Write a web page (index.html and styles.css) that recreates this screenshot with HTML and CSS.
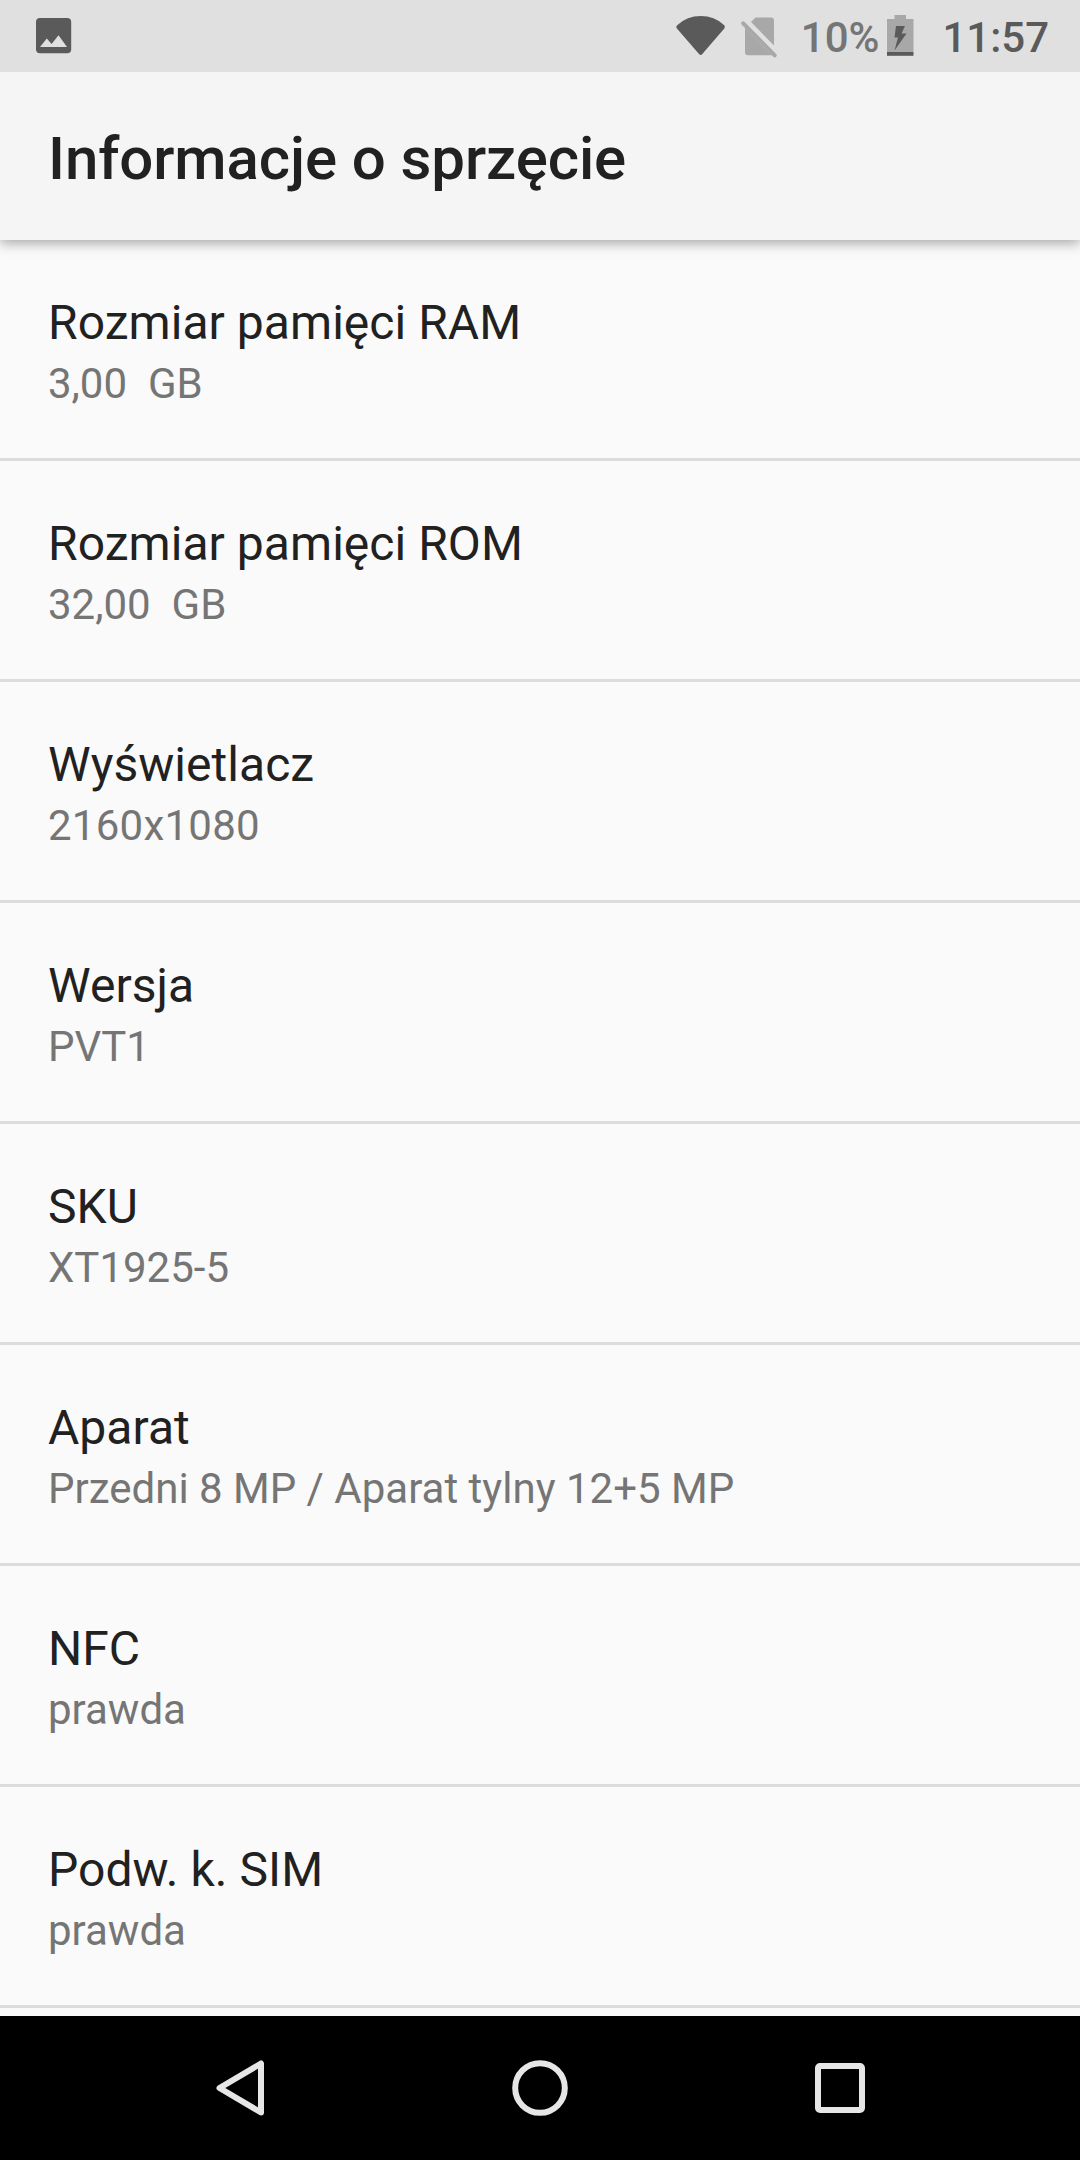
FILE: index.html
```html
<!DOCTYPE html>
<html lang="pl">
<head>
	<meta charset="UTF-8">
	<title>Informacje o sprzęcie</title>
	<link rel="stylesheet" href="styles.css">
</head>
<body>
	<div id="wrap-screen">
		<div class="status-bar">
			<svg class="icon-image" width="36" height="36" viewBox="0 0 36 36">
				<rect width="35.2" height="35.2" rx="4" fill="#5a5a5a"/>
				<path d="M4 29L10.8 20.5L15.6 26L22.5 17.3L31 29Z" fill="#e0e0e0"/>
			</svg>
			<div class="status-right">
				<svg class="icon-wifi" width="50" height="40" viewBox="0 0 50 40">
					<path d="M1.5 9Q11 0 24.7 0Q38.5 0 48 9Q49.5 10.500 48.300 12.500L26.300 38Q24.700 40 23 38L.9 12.500Q-.5 10.500 1.500 9Z" fill="#5a5a5a"/>
				</svg>
				<svg class="icon-sim" width="36" height="42" viewBox="0 0 36 42">
					<path d="M14.500 .5H30Q33 .5 33 3.500V28.500L10 5Z" fill="#a8a8a8"/>
					<path d="M4 10.500L30.800 38.300H7Q4 38.300 4 35.300Z" fill="#a8a8a8"/>
					<path d="M2.200 6.300L33.700 38.300" stroke="#a8a8a8" stroke-width="4" stroke-linecap="round"/>
				</svg>
				<span class="percent">10%</span>
				<svg class="icon-battery" width="27" height="41" viewBox="0 0 27 41">
					<path d="M7.500 0H19V4H26.500V37H0V4H7.500Z" fill="#a8a8a8"/>
					<path d="M9 11H18L14.500 18.500H19.500L7.500 35.500L11 22.500H7.500Z" fill="#5a5a5a"/>
					<rect y="37" width="26.500" height="3.800" fill="#5a5a5a"/>
				</svg>
				<span class="clock">11:57</span>
			</div>
		</div>
		<div class="toolbar">
			<h1>Informacje o sprzęcie</h1>
		</div>
		<ul class="info-list">
			<li>
				<h2>Rozmiar pamięci RAM</h2>
				<p>3,00&nbsp; GB</p>
			</li>
			<li>
				<h2>Rozmiar pamięci ROM</h2>
				<p>32,00&nbsp; GB</p>
			</li>
			<li>
				<h2>Wyświetlacz</h2>
				<p class="resolution">2160x1080</p>
			</li>
			<li>
				<h2>Wersja</h2>
				<p>PVT1</p>
			</li>
			<li>
				<h2>SKU</h2>
				<p>XT1925-5</p>
			</li>
			<li>
				<h2>Aparat</h2>
				<p>Przedni 8 MP / Aparat tylny 12+5 MP</p>
			</li>
			<li>
				<h2>NFC</h2>
				<p>prawda</p>
			</li>
			<li>
				<h2>Podw. k. SIM</h2>
				<p>prawda</p>
			</li>
		</ul>
		<div class="nav-bar">
			<div class="nav-btn">
				<svg width="60" height="60" viewBox="0 0 60 60">
					<path d="M51 5.500V54.500L9.500 30Z" fill="none" stroke="#e6e6e6" stroke-width="6" stroke-linejoin="round"/>
				</svg>
			</div>
			<div class="nav-btn">
				<svg width="60" height="60" viewBox="0 0 60 60">
					<circle cx="30" cy="30" r="24.800" fill="none" stroke="#e6e6e6" stroke-width="6"/>
				</svg>
			</div>
			<div class="nav-btn">
				<svg width="60" height="60" viewBox="0 0 60 60">
					<rect x="8" y="8" width="44" height="44" rx="2" fill="none" stroke="#e6e6e6" stroke-width="6"/>
				</svg>
			</div>
		</div>
	</div>
</body>
</html>
```

FILE: styles.css
```css
/* Reset */
body,h1,h2,p,ul,li{ margin:0; padding:0;}
ul{ list-style:none;}
h1,h2{ font-weight:normal;}
svg{ display:block;}
body{
	font-family: Roboto, "Noto Sans", sans-serif;
	background-color: #fafafa;
}
#wrap-screen{
	width: 1080px;
	height: 2160px;
	display: flex;
	flex-direction: column;
	overflow: hidden;
}
/* status bar */
.status-bar{
	height: 72px;
	flex: none;
	display: flex;
	justify-content: space-between;
	box-sizing: border-box;
	padding: 0 31px 0 36px;
	background-color: #e0e0e0;
	font-size: 42px;
	font-weight: 500;
	line-height: 76px;
	position: relative;
	z-index: 2;
}
.icon-image{
	margin-top: 18px;
}
.status-right{
	display: flex;
}
.icon-wifi{
	margin: 16px 15px 0 0;
}
.icon-sim{
	margin: 17px 24px 0 0;
}
.percent{
	color: #757575;
}
.icon-battery{
	margin: 15px 28px 0 8px;
}
.clock{
	color: #5a5a5a;
}
/* title */
.toolbar{
	height: 168px;
	flex: none;
	padding-left: 48px;
	background-color: #f5f5f5;
	box-shadow: 0 3px 12px rgba(0,0,0,0.35);
	position: relative;
	z-index: 1;
}
.toolbar h1{
	font-size: 60px;
	font-weight: 500;
	line-height: 174px;
	letter-spacing: -0.1px;
	color: #212121;
}
/* list */
.info-list{
	flex: 1;
	overflow: hidden;
}
.info-list li{
	height: 221px;
	box-sizing: border-box;
	padding: 55px 48px 0;
	border-bottom: 3px solid #dcdcdc;
}
.info-list h2{
	font-size: 48px;
	line-height: 56px;
	letter-spacing: 0.05px;
	color: #212121;
}
.info-list p{
	margin-top: 8px;
	font-size: 42px;
	line-height: 50px;
	color: #757575;
}
.info-list .resolution{
	letter-spacing: 0.25px;
}
/* bottom buttons */
.nav-bar{
	height: 144px;
	flex: none;
	display: flex;
	justify-content: center;
	background-color: #000;
}
.nav-btn{
	width: 300px;
	display: flex;
	align-items: center;
	justify-content: center;
}
```
